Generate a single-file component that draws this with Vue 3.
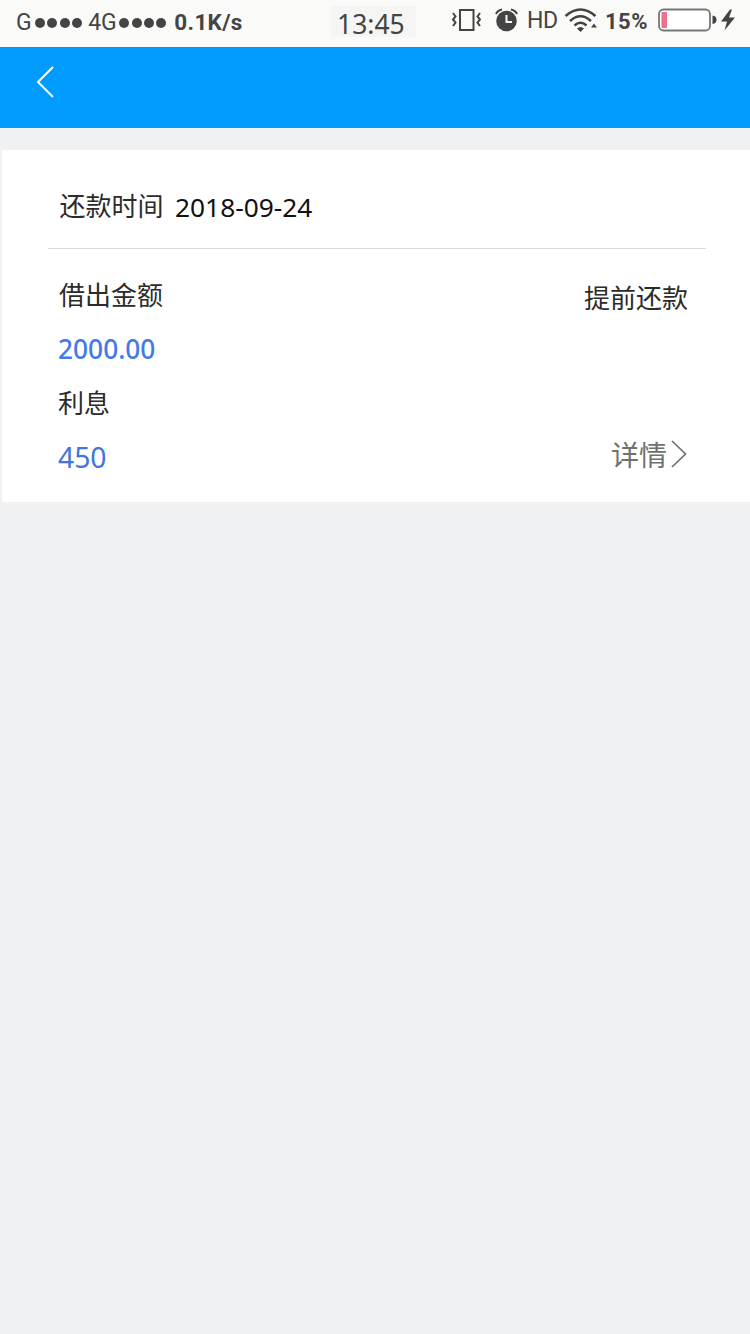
<template>
    <div class="page">
        <div class="status-bar">
            <div class="signal">
                <span class="net">G</span>
                <span class="dots"><i v-for="n in 4" :key="n"></i></span>
                <span class="net net-4g">4G</span>
                <span class="dots"><i v-for="n in 4" :key="n"></i></span>
                <span class="speed">0.1K/s</span>
            </div>
            <div class="clock">13:45</div>
            <div class="status-icons">
                <svg class="vibrate" width="30" height="24" viewBox="0 0 30 24" fill="none" stroke="#444" stroke-width="2">
                    <rect x="9" y="2" width="13.5" height="20" />
                    <path d="M2 5l2.500 3.500-2.500 3 2.500 3-2.500 3.500M29 5l-2.500 3.500 2.500 3-2.500 3 2.500 3.500" />
                </svg>
                <svg class="alarm" width="24" height="24" viewBox="0 0 24 24">
                    <circle cx="12.500" cy="13" r="10.300" fill="#444" />
                    <path d="M12.500 7v7h5.500" fill="none" stroke="#fafaf8" stroke-width="2" />
                    <path d="M2 6Q3.500 2.500 8 1.500M23 6Q21.500 2.500 17 1.500" fill="none" stroke="#444" stroke-width="2" />
                </svg>
                <span class="hd">HD</span>
                <svg class="wifi" width="34" height="24" viewBox="0 0 34 24" fill="none" stroke="#444" stroke-width="2.600">
                    <path d="M1.500 8Q16.500-5 31.500 8M6 13Q16.500 3.500 27 13M10.500 17.500Q16.500 12 22.500 17.500" />
                    <path d="M13 20.500Q16.500 17.500 20 20.500L16.500 24zM27 19.500l3-4 3 4z" fill="#444" stroke="none" />
                </svg>
                <span class="percent">15%</span>
                <svg class="battery" width="78" height="26" viewBox="0 0 78 26">
                    <rect x="1" y="2.500" width="51" height="21" rx="4.500" fill="#fff" stroke="#777" stroke-width="1.800" />
                    <rect x="3.500" y="5" width="5.500" height="16" rx="1" fill="#e9738a" />
                    <path d="M54.500 8.500q4 .5 4 4.300t-4 4.300z" fill="#444" />
                    <path d="M72 2.500L63 14.500H69L66.500 23.500L77 10.500H71L74 2.500z" fill="#444" />
                </svg>
            </div>
        </div>
        <div class="nav-bar">
            <svg class="back" width="20" height="34" viewBox="0 0 20 34" fill="none" stroke="#fff" stroke-width="2">
                <path d="M17 2L2 17l15 15" />
            </svg>
        </div>
        <div class="card">
            <div class="card-head">
                <span class="label">还款时间</span>
                <span class="date">{{ loan.date }}</span>
            </div>
            <div class="card-body">
                <div class="col">
                    <span class="label lend">借出金额</span>
                    <span class="amount">{{ loan.amount }}</span>
                    <span class="label rate">利息</span>
                    <span class="interest">{{ loan.interest }}</span>
                </div>
                <div class="col right">
                    <span class="label">提前还款</span>
                    <a class="detail">
                        详情
                        <svg width="18" height="30" viewBox="0 0 18 30" fill="none" stroke="#707070" stroke-width="1.700">
                            <path d="M2 2l13.500 13L2 28" />
                        </svg>
                    </a>
                </div>
            </div>
        </div>
    </div>
</template>

<script setup>
const loan = {
    date: '2018-09-24',
    amount: '2000.00',
    interest: '450',
};
</script>

<style>
body {
    background: #f0f1f3;
}
</style>

<style scoped>
.page {
    width: 750px;
    min-height: 1334px;
    background: #f0f1f3;
    font-family: "Noto Sans", "Noto Sans CJK SC", sans-serif;
    color: #2b2b2b;
}

.status-bar {
    display: flex;
    height: 47px;
    background: #fafaf8;
    color: #444;
}

.signal {
    display: flex;
    width: 331px;
    height: 42px;
    padding-left: 16px;
    box-sizing: border-box;
    align-items: center;
    white-space: nowrap;
}

.net {
    width: 18px;
    padding-top: 3px;
    font: 23px/42px Roboto, sans-serif;
}

.net-4g {
    width: 30px;
    margin-left: 6px;
}

.dots {
    display: flex;
    gap: 2.4px;
    padding: 3px 0 0 1px;
}

.dots i {
    width: 10px;
    height: 10px;
    border-radius: 50%;
    background: #444;
}

.speed {
    margin-left: 8px;
    padding-top: 1px;
    font: bold 22.5px/42px Roboto, sans-serif;
    letter-spacing: 0.3px;
}

.clock {
    width: 85px;
    height: 31px;
    margin-top: 6px;
    padding-left: 6px;
    box-sizing: border-box;
    background: #f5f5f4;
    font-size: 26.5px;
    line-height: 36px;
}

.status-icons {
    display: flex;
    height: 40px;
    padding-left: 35px;
    align-items: center;
}

.alarm {
    margin-left: 13px;
}

.hd {
    width: 31px;
    margin-left: 9px;
    padding-top: 1px;
    font: 23px/40px Roboto, sans-serif;
    letter-spacing: -0.5px;
}

.wifi {
    margin-left: 6px;
}

.percent {
    width: 45px;
    margin-left: 7px;
    padding-top: 3px;
    font: bold 22px/40px Roboto, sans-serif;
    letter-spacing: 0.5px;
}

.battery {
    margin-left: 8px;
}

.nav-bar {
    height: 81px;
    background: #009bff;
}

.back {
    display: block;
    padding: 18px 0 0 36px;
}

.card {
    height: 352px;
    margin: 22px 0 0 2px;
    background: #fff;
}

.card-head {
    display: flex;
    height: 99px;
    margin: 0 44px 0 46px;
    padding-left: 11.5px;
    box-sizing: border-box;
    border-bottom: 1px solid #d8d8d8;
    line-height: 110px;
}

.label {
    font-family: "Noto Sans CJK SC", sans-serif;
    font-size: 26px;
}

.date {
    margin-left: 11.5px;
    font-size: 26.3px;
    line-height: 115px;
    color: #111;
}

.card-body {
    display: flex;
    justify-content: space-between;
    padding: 18px 62px 0 56px;
}

.col {
    display: flex;
    flex-direction: column;
    line-height: 54px;
}

.lend {
    padding-left: 1px;
}

.amount {
    padding-top: 1px;
    font-size: 26.3px;
    font-weight: 500;
    color: #447ae8;
}

.rate {
    margin-top: -1px;
}

.interest {
    padding-top: 1px;
    font-size: 28.3px;
    color: #4275dd;
}

.right {
    padding-top: 3px;
    align-items: flex-end;
}

.detail {
    display: flex;
    margin-top: 103px;
    align-items: center;
    gap: 3px;
    font-family: "Noto Sans CJK SC", sans-serif;
    font-size: 28px;
    color: #707070;
}
</style>
